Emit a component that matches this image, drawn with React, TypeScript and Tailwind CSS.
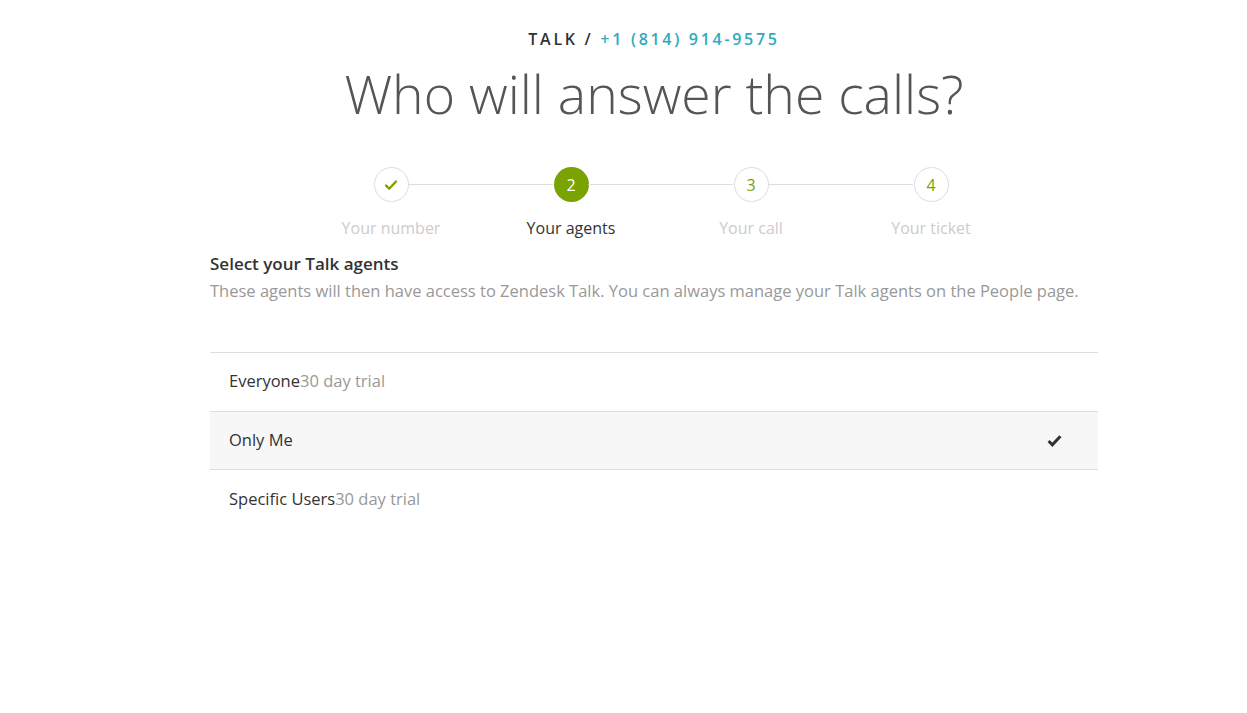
import React from 'react';

const steps = [
  { label: 'Your number', state: 'done' },
  { label: 'Your agents', state: 'active' },
  { label: 'Your call', state: 'todo' },
  { label: 'Your ticket', state: 'todo' },
];

const options = [
  { name: 'Everyone', trial: true, selected: false },
  { name: 'Only Me', trial: false, selected: true },
  { name: 'Specific Users', trial: true, selected: false },
];

export default function App() {
  return (
    <div className="min-h-[713px] w-full bg-white font-['Open_Sans',sans-serif]">
      <div className="ml-[210px] w-[888px] pt-[26px]">
        <div className="text-center text-[16px] font-semibold tracking-[2.7px] leading-[26px]">
          <span className="text-[#333]">TALK / </span>
          <span className="text-[#30aabc]">+1 (814) 914-9575</span>
        </div>
        <h1 className="mt-[10px] text-center text-[53.5px] font-light leading-[64px] text-[#555]">
          Who will answer the calls?
        </h1>

        <div className="mt-[41px] ml-[91px] flex w-[720px]">
          {steps.map((s, i) => (
            <div key={s.label} className="relative flex w-[180px] flex-col items-center">
              {i > 0 && (
                <div className="absolute left-[-73px] top-[17px] h-px w-[145px] bg-[#ddd]" />
              )}
              <div
                className={
                  s.state === 'active'
                    ? 'flex h-[35px] w-[35px] items-center justify-center rounded-full bg-[#78a300] text-[16px] text-white'
                    : 'flex h-[35px] w-[35px] items-center justify-center rounded-full border border-[#ddd] bg-white text-[16px] text-[#78a300]'
                }
              >
                {s.state === 'done' ? (
                  <svg width="14" height="12" viewBox="0 0 14 12">
                    <path d="M2 6.5l3.2 3.2L12 2.5" fill="none" stroke="#78a300" strokeWidth="2.4" strokeLinecap="round" strokeLinejoin="round" />
                  </svg>
                ) : (
                  i + 1
                )}
              </div>
              <div
                className={
                  s.state === 'active'
                    ? 'mt-[15px] text-[16px] leading-[22px] text-[#333]'
                    : 'mt-[15px] text-[16px] leading-[22px] text-[#ccc]'
                }
              >
                {s.label}
              </div>
            </div>
          ))}
        </div>

        <div className="mt-[13px] text-[17px] font-semibold leading-[24px] text-[#333]">
          Select your Talk agents
        </div>
        <div className="mt-[3px] text-[16.5px] leading-[24px] text-[#999]">
          These agents will then have access to Zendesk Talk. You can always manage your Talk agents on the People page.
        </div>

        <div className="mt-[49px] border-t border-[#ddd]">
          {options.map((o, i) => (
            <div
              key={o.name}
              className={
                (o.selected ? 'bg-[#f7f7f7] ' : 'bg-white ') +
                (i < options.length - 1 ? 'border-b border-[#ddd] ' : '') +
                'flex h-[58.5px] items-center justify-between pl-[19px] pr-[36px] text-[16.5px]'
              }
            >
              <div>
                <span className="text-[#333]">{o.name}</span>
                {o.trial && <span className="text-[#999]">30 day trial</span>}
              </div>
              {o.selected && (
                <svg width="15" height="13" viewBox="0 0 14 12">
                  <path d="M1.5 6.5l3.5 3.5L12.5 2" fill="none" stroke="#333" strokeWidth="2.8" strokeLinejoin="miter" />
                </svg>
              )}
            </div>
          ))}
        </div>
      </div>
    </div>
  );
}
